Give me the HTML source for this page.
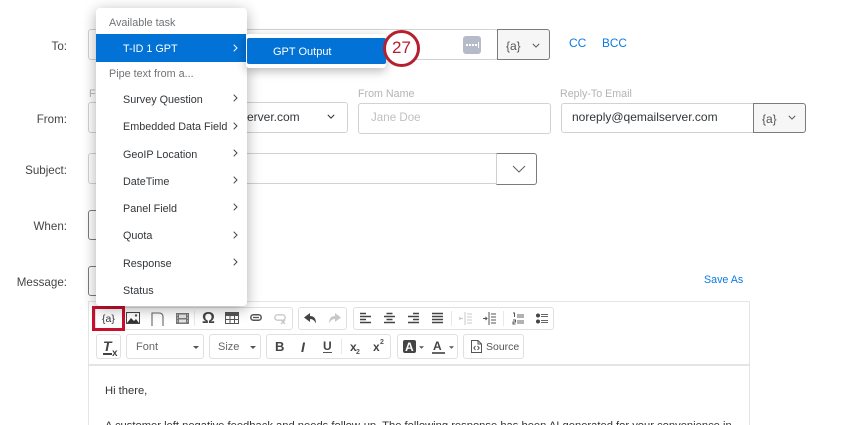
<!DOCTYPE html>
<html><head><meta charset="utf-8">
<style>
html,body{margin:0;padding:0;background:#fff}
#p{position:relative;width:850px;height:425px;overflow:hidden;background:#fff;font-family:"Liberation Sans",sans-serif;color:#32363a;font-size:12px}
#p div,#p svg{position:absolute;box-sizing:border-box}
.t{white-space:nowrap;line-height:16px}
.lb{right:783px;font-size:11.6px;color:#444;white-space:nowrap;line-height:16px}
.in{background:#fff;border:1.5px solid #d2d2d2;border-radius:3px}
.btn{background:#f6f6f6;border:1.5px solid #7b7b7b;border-radius:0 3px 3px 0}
.sm{font-size:10.7px;color:#b4b4b4;white-space:nowrap;line-height:14px}
.m{left:123px;font-size:10.8px;color:#32363a;white-space:nowrap;line-height:14px}
.h{left:109px;font-size:10.8px;color:#6f7276;white-space:nowrap;line-height:14px}
.g{background:#fff;border:1.5px solid #e0e0e0;border-radius:3px}
.tb{font-size:10.5px;color:#555;white-space:nowrap;line-height:14px}
</style></head><body>
<div id="p">

<div class="lb" style="top:39px">To:</div>
<div class="lb" style="top:112px">From:</div>
<div class="lb" style="top:163px">Subject:</div>
<div class="lb" style="top:219px">When:</div>
<div class="lb" style="top:275px">Message:</div>

<!-- To -->
<div class="in" style="left:88px;top:29px;width:410px;height:31px"></div>
<div style="left:463px;top:36px;width:18px;height:18px;background:#b6bbc9;border-radius:3px"></div>
<div style="left:466px;top:44px;width:2px;height:2px;background:#fff"></div>
<div style="left:469px;top:44px;width:2px;height:2px;background:#fff"></div>
<div style="left:472px;top:44px;width:2px;height:2px;background:#fff"></div>
<div style="left:475px;top:44px;width:2px;height:2px;background:#fff"></div>
<div style="left:478px;top:42px;width:1px;height:6px;background:#fff"></div>
<div class="btn" style="left:497px;top:29px;width:53px;height:31px"></div>
<div class="t" style="left:506px;top:38px;color:#555">{a}</div>
<svg style="left:532px;top:43px" width="8" height="5" viewBox="0 0 10 6"><path d="M1 1l4 4 4-4" fill="none" stroke="#555" stroke-width="1.2"/></svg>
<div class="t" style="left:569px;top:35px;color:#0b7be0;font-size:12px">CC</div>
<div class="t" style="left:602px;top:35px;color:#0b7be0;font-size:11.800px">BCC</div>

<!-- From -->
<div class="in" style="left:88px;top:102px;width:260px;height:31px"></div>
<div class="sm" style="left:89px;top:87px">F</div>
<div class="t" style="left:241px;top:109px;font-size:12px">server.com</div>
<svg style="left:327px;top:114px" width="8" height="5" viewBox="0 0 10 6"><path d="M1 1l4 4 4-4" fill="none" stroke="#333" stroke-width="1.3"/></svg>
<div class="sm" style="left:358px;top:87px">From Name</div>
<div class="in" style="left:358px;top:103px;width:193px;height:31px"></div>
<div class="t" style="left:371px;top:110px;color:#c0c0c0;font-size:11.600px">Jane Doe</div>
<div class="sm" style="left:560px;top:87px">Reply-To Email</div>
<div class="in" style="left:561px;top:103px;width:194px;height:30px"></div>
<div class="t" style="left:572px;top:109px;font-size:12px">noreply@qemailserver.com</div>
<div class="btn" style="left:753px;top:103px;width:53px;height:30px"></div>
<div class="t" style="left:762px;top:111px;color:#555">{a}</div>
<svg style="left:788px;top:115px" width="8" height="5" viewBox="0 0 10 6"><path d="M1 1l4 4 4-4" fill="none" stroke="#555" stroke-width="1.2"/></svg>

<!-- Subject -->
<div class="in" style="left:88px;top:153px;width:410px;height:31px"></div>
<div style="left:496px;top:153px;width:41px;height:32px;background:#fff;border:1.5px solid #7b7b7b;border-left-color:#d0d0d0;border-radius:0 3px 3px 0"></div>
<svg style="left:512px;top:165px" width="14" height="9" viewBox="0 0 14 9"><path d="M1 1l6 6 6-6" fill="none" stroke="#666" stroke-width="1.1"/></svg>

<!-- When / Message stubs -->
<div style="left:88px;top:210px;width:20px;height:30px;border:1.5px solid #7b7b7b;border-radius:3px"></div>
<div style="left:88px;top:266px;width:20px;height:30px;border:1.5px solid #7b7b7b;border-radius:3px"></div>

<div class="t" style="left:704px;top:272px;color:#0b7be0;font-size:10.700px">Save As</div>

<!-- Editor -->
<div style="left:88px;top:301px;width:662px;height:130px;border:1.5px solid #e4e4e4;background:#fff"></div>
<div style="left:89px;top:364px;width:660px;height:1.5px;background:#e4e4e4"></div>

<div class="g" style="left:95px;top:307px;width:198px;height:22.500px"></div>
<div class="g" style="left:298px;top:307px;width:49px;height:22.500px"></div>
<div class="g" style="left:353px;top:307px;width:201px;height:22.500px"></div>
<div class="g" style="left:96px;top:334px;width:25px;height:25px"></div>
<div class="g" style="left:126px;top:334px;width:78px;height:25px"></div>
<div class="g" style="left:209px;top:334px;width:52px;height:25px"></div>
<div class="g" style="left:266px;top:334px;width:125px;height:25px"></div>
<div class="g" style="left:397px;top:334px;width:61px;height:25px"></div>
<div class="g" style="left:463px;top:334px;width:61px;height:25px"></div>

<!-- separators -->
<div style="left:194px;top:311px;width:1px;height:15px;background:#e8e8e8"></div>
<div style="left:451px;top:311px;width:1px;height:15px;background:#e8e8e8"></div>
<div style="left:503px;top:311px;width:1px;height:15px;background:#e8e8e8"></div>
<div style="left:341px;top:339px;width:1px;height:15px;background:#e8e8e8"></div>

<!-- Row 1 icons -->
<div class="tb" style="left:102px;top:312px;color:#333">{a}</div>
<svg style="left:126px;top:312px" width="14" height="12" viewBox="0 0 14 12"><rect x="0.5" y="0.5" width="13" height="11" fill="#fff" stroke="#444"/><path d="M1 11l4-5 3 3 2-2 3 4z" fill="#333"/><circle cx="10" cy="3.5" r="1.2" fill="#555"/></svg>
<svg style="left:151px;top:312px" width="13" height="14" viewBox="0 0 13 14"><path d="M1 14V1H8Q12 1 12 5V14" fill="none" stroke="#666" stroke-width="1.1"/></svg>
<svg style="left:176px;top:313px" width="13" height="11" viewBox="0 0 13 11"><rect width="13" height="11" fill="#777"/><rect x="3" y="1.500" width="7" height="3.500" fill="#e4e4e4"/><rect x="3" y="6.500" width="7" height="3" fill="#e4e4e4"/><path d="M1 2h1M1 5h1M1 8h1M11 2h1M11 5h1M11 8h1" stroke="#e4e4e4"/></svg>
<div class="tb" style="left:202px;top:310px;font-size:16px;line-height:18px;color:#444;font-weight:bold">Ω</div>
<svg style="left:225px;top:312px" width="14" height="12" viewBox="0 0 14 12"><rect width="14" height="12" fill="#555"/><path d="M1 4h3.500v3H1zM5.500 4H9v3H5.500zM10 4h3v3h-3zM1 8h3.500v3H1zM5.500 8H9v3H5.500zM10 8h3v3h-3z" fill="#fff"/></svg>
<svg style="left:250px;top:314px" width="12" height="7" viewBox="0 0 12 7"><rect x="0.800" y="0.800" width="10.400" height="5.400" rx="2.700" fill="none" stroke="#555" stroke-width="1.500"/><path d="M3 3.500h6" stroke="#555" stroke-width="1.300"/></svg>
<svg style="left:274px;top:314px" width="13" height="11" viewBox="0 0 13 11"><rect x="0.800" y="0.800" width="10.400" height="5.400" rx="2.700" fill="none" stroke="#c8c8c8" stroke-width="1.400"/><path d="M7 6l4 4M11 6l-4 4" stroke="#c8c8c8" stroke-width="1.400"/></svg>
<svg style="left:304px;top:313px" width="13" height="11" viewBox="0 0 13 11"><path d="M6 0L0 4.500 6 9V6Q10 6 12 10.500 12 3 6 3z" fill="#444"/></svg>
<svg style="left:328px;top:313px" width="13" height="11" viewBox="0 0 13 11"><path d="M7 0l6 4.500L7 9V6Q3 6 1 10.500 1 3 7 3z" fill="#c8c8c8"/></svg>

<svg style="left:360px;top:312px" width="11" height="12" viewBox="0 0 11 12"><path d="M0 1.500h6M0 4.500h11M0 7.500h6M0 10.500h11" stroke="#444" stroke-width="1.600"/></svg>
<svg style="left:384px;top:312px" width="11" height="12" viewBox="0 0 11 12"><path d="M2.500 1.500h6M0 4.500h11M2.500 7.500h6M0 10.500h11" stroke="#444" stroke-width="1.600"/></svg>
<svg style="left:408px;top:312px" width="11" height="12" viewBox="0 0 11 12"><path d="M5 1.500h6M0 4.500h11M5 7.500h6M0 10.500h11" stroke="#444" stroke-width="1.600"/></svg>
<svg style="left:432px;top:312px" width="11" height="12" viewBox="0 0 11 12"><path d="M0 1.500h11M0 4.500h11M0 7.500h11M0 10.500h11" stroke="#444" stroke-width="1.600"/></svg>
<svg style="left:459px;top:312px" width="13" height="13" viewBox="0 0 13 13"><path d="M6 0v13M8 2h5M8 5h5M8 8h5M8 11h5M0 6.500h4M1.500 5L0 6.500 1.500 8" fill="none" stroke="#c8c8c8"/></svg>
<svg style="left:483px;top:312px" width="13" height="13" viewBox="0 0 13 13"><path d="M6 0v13M8 2h5M8 5h5M8 8h5M8 11h5M0 6.500h4M2.500 5L4 6.500 2.500 8" fill="none" stroke="#555"/></svg>
<svg style="left:512px;top:312px" width="12" height="13" viewBox="0 0 12 13"><path d="M5 3h7M5 5h7M5 9h7M5 11h7" stroke="#666"/><path d="M1 1h1.500v4M1 8h2.500v2H1v2h2.500" fill="none" stroke="#555"/></svg>
<svg style="left:536px;top:313px" width="12" height="11" viewBox="0 0 12 11"><circle cx="2" cy="2.500" r="2" fill="#444"/><circle cx="2" cy="8.500" r="2" fill="#444"/><path d="M5 1.500h7M5 3.500h7M5 7.500h7M5 9.500h7" stroke="#666"/></svg>

<!-- Row 2 -->
<div class="t" style="left:103px;top:338px;font-family:'Liberation Sans',sans-serif;font-style:italic;font-weight:bold;font-size:14px;color:#444">T</div>
<div style="left:103px;top:353px;width:9px;height:1.500px;background:#444"></div>
<div class="t" style="left:112px;top:346px;font-size:10px;font-weight:bold;color:#444">x</div>
<div class="tb" style="left:136px;top:340px;color:#666;font-size:11px">Font</div>
<svg style="left:193px;top:346px" width="6" height="3" viewBox="0 0 6 3"><path d="M0 0h6L3 3z" fill="#555"/></svg>
<div class="tb" style="left:218px;top:340px;color:#666;font-size:11px">Size</div>
<svg style="left:250px;top:346px" width="6" height="3" viewBox="0 0 6 3"><path d="M0 0h6L3 3z" fill="#555"/></svg>
<div class="t" style="left:275px;top:339px;font-weight:bold;font-size:13px;color:#444">B</div>
<div class="t" style="left:301px;top:339px;font-weight:bold;font-style:italic;font-family:'Liberation Sans',sans-serif;font-size:14px;color:#444">I</div>
<div class="t" style="left:323px;top:338px;font-weight:bold;font-size:12px;color:#444">U</div>
<div style="left:323px;top:352px;width:9px;height:1.200px;background:#555"></div>
<div class="t" style="left:350px;top:339px;font-weight:bold;font-size:12px;color:#444">x</div>
<div class="t" style="left:356px;top:345px;font-weight:bold;font-size:7px;color:#555">2</div>
<div class="t" style="left:373px;top:339px;font-weight:bold;font-size:12px;color:#444">x</div>
<div class="t" style="left:380px;top:335px;font-weight:bold;font-size:7px;color:#555">2</div>
<div style="left:403px;top:340px;width:13px;height:13px;background:#444;border-radius:2px"></div>
<div class="t" style="left:405px;top:339px;font-weight:bold;font-size:12px;color:#fff">A</div>
<svg style="left:419px;top:346px" width="5" height="3" viewBox="0 0 6 3"><path d="M0 0h6L3 3z" fill="#555"/></svg>
<div class="t" style="left:433px;top:338px;font-weight:bold;font-size:12px;color:#444">A</div>
<div style="left:432px;top:352px;width:13px;height:1.500px;background:#666"></div>
<svg style="left:449px;top:346px" width="5" height="3" viewBox="0 0 6 3"><path d="M0 0h6L3 3z" fill="#555"/></svg>
<svg style="left:471px;top:340px" width="11" height="13" viewBox="0 0 11 13"><path d="M.5.500H7L10.500 4v8.500H.5z" fill="none" stroke="#555"/><path d="M7 .5V4h3.500" fill="none" stroke="#555"/><path d="M4.500 6L2.800 8l1.700 2M6.500 6l1.700 2-1.700 2" fill="none" stroke="#555"/></svg>
<div class="tb" style="left:486px;top:340px;color:#555">Source</div>

<div class="t" style="left:105px;top:383px;font-size:11.200px;color:#333">Hi there,</div>
<div class="t" style="left:105px;top:418px;font-size:11.200px;color:#333">A customer left negative feedback and needs follow-up. The following response has been AI generated for your convenience in</div>

<!-- Red highlight -->
<div style="left:92px;top:306px;width:33px;height:25px;border:3px solid #c8102e"></div>

<!-- Main menu -->
<div style="left:96px;top:8px;width:151px;height:298px;background:#fff;border-radius:4px;box-shadow:0 3px 14px rgba(0,0,0,.32)"></div>
<div style="left:96px;top:34px;width:150px;height:28px;background:#0272d6"></div>
<div class="h" style="top:16px">Available task</div>
<div class="m" style="top:42px;color:#fff">T-ID 1 GPT</div>
<div class="h" style="top:67px">Pipe text from a...</div>
<div class="m" style="top:93px">Survey Question</div>
<div class="m" style="top:120px">Embedded Data Field</div>
<div class="m" style="top:148px">GeoIP Location</div>
<div class="m" style="top:175px">DateTime</div>
<div class="m" style="top:202px">Panel Field</div>
<div class="m" style="top:229px">Quota</div>
<div class="m" style="top:257px">Response</div>
<div class="m" style="top:284px">Status</div>
<svg style="left:233px;top:44px" width="5" height="8" viewBox="0 0 5 8"><path d="M.7.700L4 4 .7 7.300" fill="none" stroke="#fff" stroke-width="1"/></svg>
<svg style="left:233px;top:94px" width="5" height="8" viewBox="0 0 5 8"><path d="M.7.700L4 4 .7 7.300" fill="none" stroke="#444" stroke-width="1"/></svg>
<svg style="left:233px;top:122px" width="5" height="8" viewBox="0 0 5 8"><path d="M.7.700L4 4 .7 7.300" fill="none" stroke="#444" stroke-width="1"/></svg>
<svg style="left:233px;top:149px" width="5" height="8" viewBox="0 0 5 8"><path d="M.7.700L4 4 .7 7.300" fill="none" stroke="#444" stroke-width="1"/></svg>
<svg style="left:233px;top:176px" width="5" height="8" viewBox="0 0 5 8"><path d="M.7.700L4 4 .7 7.300" fill="none" stroke="#444" stroke-width="1"/></svg>
<svg style="left:233px;top:203px" width="5" height="8" viewBox="0 0 5 8"><path d="M.7.700L4 4 .7 7.300" fill="none" stroke="#444" stroke-width="1"/></svg>
<svg style="left:233px;top:231px" width="5" height="8" viewBox="0 0 5 8"><path d="M.7.700L4 4 .7 7.300" fill="none" stroke="#444" stroke-width="1"/></svg>
<svg style="left:233px;top:258px" width="5" height="8" viewBox="0 0 5 8"><path d="M.7.700L4 4 .7 7.300" fill="none" stroke="#444" stroke-width="1"/></svg>

<!-- Submenu -->
<div style="left:246px;top:34px;width:140px;height:34px;background:#fff;border-radius:3px;box-shadow:0 3px 10px rgba(0,0,0,.28)"></div>
<div style="left:247px;top:38px;width:139px;height:26px;background:#0272d6;border-radius:2px"></div>
<div class="m" style="left:273px;top:45px;color:#fff;font-size:11px">GPT Output</div>

<!-- Badge -->
<div style="left:383px;top:30px;width:37px;height:37px;border-radius:50%;background:#fff;border:3px solid #b5202f"></div>
<div class="t" style="left:392px;top:38px;font-size:17px;line-height:20px;color:#b5202f;width:24px">27</div>

</div>
</body></html>
